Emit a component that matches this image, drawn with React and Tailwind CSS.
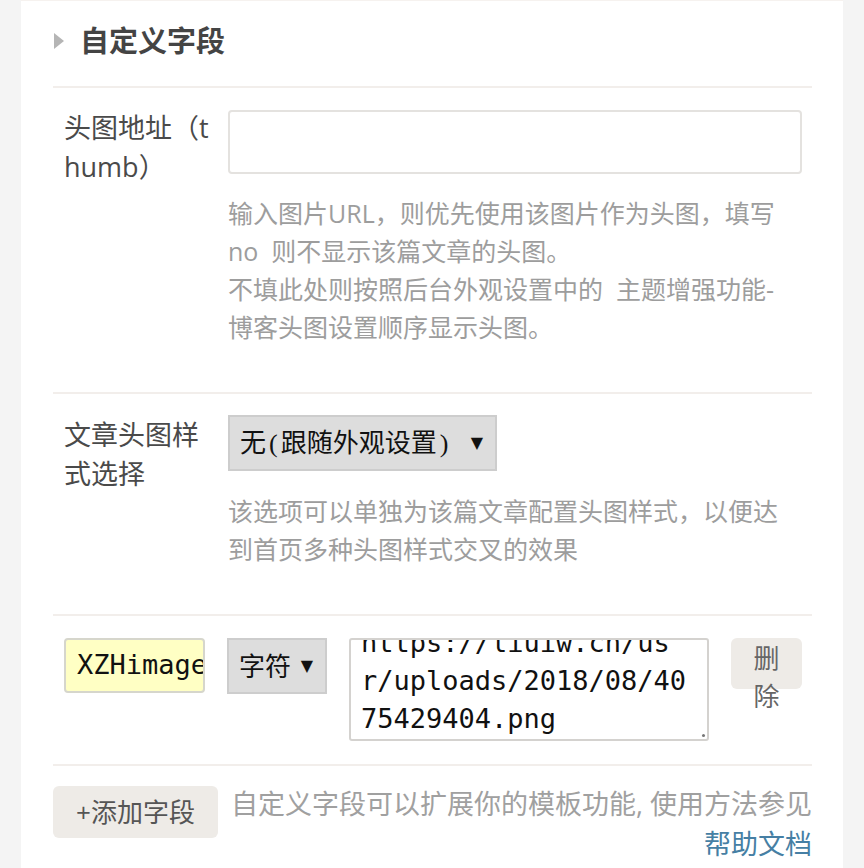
import React from "react";

const sans = { fontFamily: '"Open Sans", "Noto Sans CJK SC", sans-serif' };
const mono = { fontFamily: '"DejaVu Sans Mono", "Noto Sans CJK SC", monospace' };

const Paren = ({ children }) => (
  <span className="px-[3px]" style={{ fontFamily: '"Liberation Serif", serif' }}>
    {children}
  </span>
);

const Select = ({ children, width }) => (
  <div
    className={`flex items-center justify-between h-[56px] pl-[10px] pr-[12px] bg-[#dddddd] border-2 border-[#cdcdcd] text-[26px] text-[#111] whitespace-nowrap ${width}`}
  >
    <span>{children}</span>
    <span className="text-[16px]" style={{ fontFamily: '"DejaVu Sans", sans-serif' }}>▼</span>
  </div>
);

const App = () => {
  return (
    <div className="min-h-[868px] bg-[#f4f4f4]" style={sans}>
      <div className="ml-[21px] w-[822px] min-h-[868px] bg-white border-t border-[#f6f2ef] pl-[32px] pr-[31px]">
        {/* header */}
        <div className="flex items-center pt-[18px] pb-[23px] border-b-2 border-[#f2eeeb]">
          <svg width="10" height="16" viewBox="0 0 10 16" className="ml-[1px] mr-[16px]">
            <polygon points="0,0 10,8 0,16" fill="#b5b5b5" />
          </svg>
          <h2 className="text-[29px] leading-[44px] font-bold text-[#444]">自定义字段</h2>
        </div>

        {/* thumb */}
        <div className="grid grid-cols-[175px_1fr] pt-[22px] pb-[46px] border-b-2 border-[#f2eeeb]">
          <div className="pl-[11px] pr-[16px] text-[27px] leading-[39px] text-[#4a4a4a] break-all -mt-[2px]">
            头图地址（thumb）
          </div>
          <div className="pr-[10px]">
            <div className="h-[64px] border-2 border-[#e4e2df] rounded-[4px] bg-white"></div>
            <p className="mt-[20px] mr-[5px] text-[25px] leading-[38px] text-[#9d9d9d]">
              输入图片URL，则优先使用该图片作为头图，填写 no&nbsp; 则不显示该篇文章的头图。
              <br />
              不填此处则按照后台外观设置中的&nbsp; 主题增强功能-博客头图设置顺序显示头图。
            </p>
          </div>
        </div>

        {/* style */}
        <div className="grid grid-cols-[175px_1fr] pt-[21px] pb-[46px] border-b-2 border-[#f2eeeb]">
          <div className="pl-[11px] pr-[16px] text-[27px] leading-[39px] text-[#4a4a4a] break-all">
            文章头图样式选择
          </div>
          <div className="pr-[10px]">
            <Select width="w-[269px]">
              无<Paren>(</Paren>跟随外观设置<Paren>)</Paren>
            </Select>
            <p className="mt-[21px] mr-[5px] text-[25px] leading-[38px] text-[#9d9d9d]">
              该选项可以单独为该篇文章配置头图样式，以便达到首页多种头图样式交叉的效果
            </p>
          </div>
        </div>

        {/* custom field row */}
        <div className="flex items-start gap-[22px] pl-[11px] pr-[10px] pt-[22px] pb-[23px] border-b-2 border-[#f2eeeb]">
          <div
            className="flex items-center w-[141px] h-[55px] pl-[11px] bg-[#ffffc4] border-2 border-[#d6d6cc] rounded-[4px] overflow-hidden whitespace-nowrap text-[27px] text-[#111]"
            style={mono}
          >
            XZHimage
          </div>
          <Select width="w-[100px]">字符</Select>
          <div className="relative w-[360px] h-[103px] border-2 border-[#d4d2cf] rounded-[3px] overflow-hidden">
            <div className="-mt-[16px] pl-[10px] text-[27px] leading-[38px] text-[#111]" style={mono}>
              <div>https://liuiw.cn/us</div>
              <div>r/uploads/2018/08/40</div>
              <div>75429404.png</div>
            </div>
            <span className="absolute right-[2px] bottom-[2px] w-[3px] h-[3px] bg-[#777] rounded-full"></span>
          </div>
          <button className="w-[71px] h-[51px] px-[10px] pt-[1px] bg-[#eeebe7] rounded-[6px] text-[26px] leading-[38px] text-[#666] self-start flex flex-col items-center justify-start overflow-visible">
            <span>删</span>
            <span>除</span>
          </button>
        </div>

        {/* footer */}
        <div className="flex items-start gap-[12px] pt-[20px]">
          <button className="shrink-0 w-[165px] h-[52px] bg-[#eeebe7] rounded-[6px] text-[26px] text-[#555]">
            +添加字段
          </button>
          <p className="flex-1 -mt-[2px] text-right text-[27px] leading-[40px] text-[#a0a0a0]">
            自定义字段可以扩展你的模板功能, 使用方法参见
            <a className="text-[#467fa4]">帮助文档</a>
          </p>
        </div>
      </div>
    </div>
  );
};

export default App;
